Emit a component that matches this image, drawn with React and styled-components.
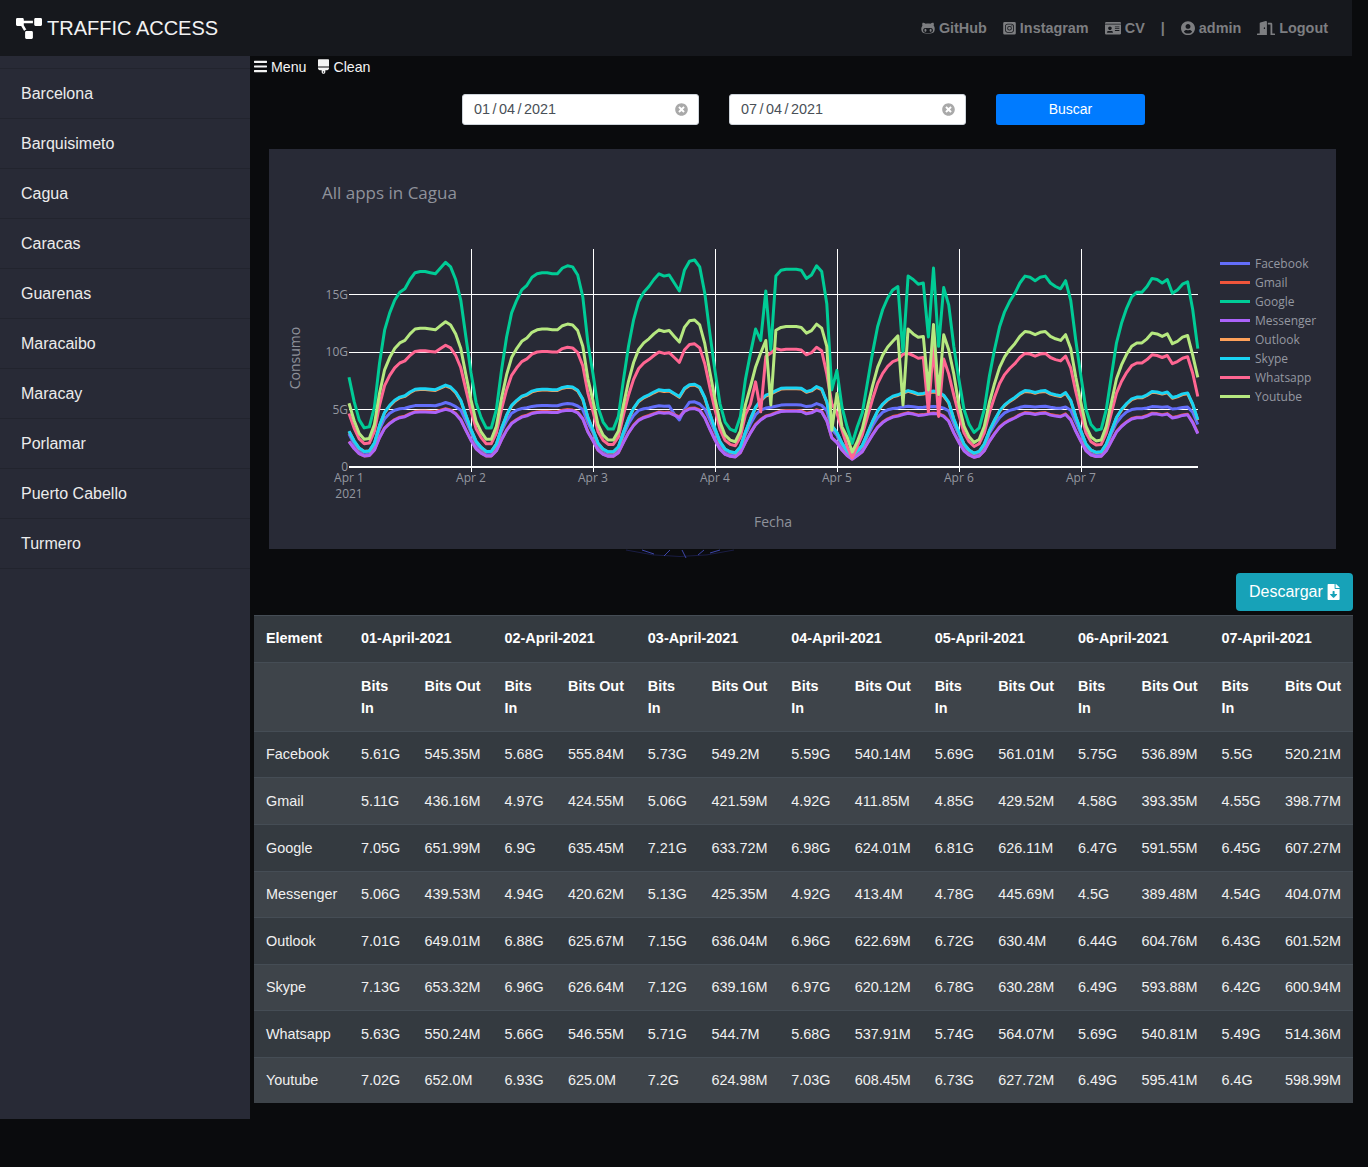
import styled, { createGlobalStyle } from "styled-components";
import {
  FaBars,
  FaBrush,
  FaDoorOpen,
  FaFileDownload,
  FaGithubAlt,
  FaIdCard,
  FaInstagramSquare,
  FaProjectDiagram,
  FaTimesCircle,
  FaUserCircle,
} from "react-icons/fa";

const CITIES = [
  "Barcelona",
  "Barquisimeto",
  "Cagua",
  "Caracas",
  "Guarenas",
  "Maracaibo",
  "Maracay",
  "Porlamar",
  "Puerto Cabello",
  "Turmero",
];

const DAYS = ["01", "02", "03", "04", "05", "06", "07"];

const ROWS = [
  ["Facebook", "5.61G", "545.35M", "5.68G", "555.84M", "5.73G", "549.2M", "5.59G", "540.14M", "5.69G", "561.01M", "5.75G", "536.89M", "5.5G", "520.21M"],
  ["Gmail", "5.11G", "436.16M", "4.97G", "424.55M", "5.06G", "421.59M", "4.92G", "411.85M", "4.85G", "429.52M", "4.58G", "393.35M", "4.55G", "398.77M"],
  ["Google", "7.05G", "651.99M", "6.9G", "635.45M", "7.21G", "633.72M", "6.98G", "624.01M", "6.81G", "626.11M", "6.47G", "591.55M", "6.45G", "607.27M"],
  ["Messenger", "5.06G", "439.53M", "4.94G", "420.62M", "5.13G", "425.35M", "4.92G", "413.4M", "4.78G", "445.69M", "4.5G", "389.48M", "4.54G", "404.07M"],
  ["Outlook", "7.01G", "649.01M", "6.88G", "625.67M", "7.15G", "636.04M", "6.96G", "622.69M", "6.72G", "630.4M", "6.44G", "604.76M", "6.43G", "601.52M"],
  ["Skype", "7.13G", "653.32M", "6.96G", "626.64M", "7.12G", "639.16M", "6.97G", "620.12M", "6.78G", "630.28M", "6.49G", "593.88M", "6.42G", "600.94M"],
  ["Whatsapp", "5.63G", "550.24M", "5.66G", "546.55M", "5.71G", "544.7M", "5.68G", "537.91M", "5.74G", "564.07M", "5.69G", "540.81M", "5.49G", "514.36M"],
  ["Youtube", "7.02G", "652.0M", "6.93G", "625.0M", "7.2G", "624.98M", "7.03G", "608.45M", "6.73G", "627.72M", "6.49G", "595.41M", "6.4G", "598.99M"],
];

// hourly traffic shape of one day, in G
const BASE = [
  [7.8, 5.7, 4.1, 3.4, 3.5, 5.2, 9, 11.9, 13.4, 14.5, 15.2, 15.5, 16.3, 16.9, 17, 17, 16.9, 16.8, 17.3, 17.8, 17.4, 16.3, 14.5, 11.3],
  [8.2, 5.6, 4.3, 3.4, 3.4, 5, 8.4, 11.3, 13.4, 14.5, 15.4, 15.8, 16.5, 16.8, 16.9, 16.9, 16.8, 16.8, 17.3, 17.5, 17.4, 16.7, 14.8, 10.8],
  [8.1, 5.2, 3.9, 3.3, 3.3, 4.4, 7.6, 10.5, 12.8, 14.4, 15.2, 15.7, 16.3, 16.8, 16.6, 16.7, 16, 15.3, 17.1, 17.9, 18, 17.4, 15.1, 11.6],
  [8.4, 5.5, 3.9, 3.3, 3.1, 4.4, 7.6, 10.5, 13, 14.5, 15.6, 16, 16.6, 17.1, 17.2, 17.2, 17.2, 17.1, 16.4, 16.7, 17.5, 17, 14.2, 9],
  [7.5, 5.2, 3.5, 2.4, 3.5, 4.7, 7.3, 9.9, 12.2, 13.7, 14.7, 15.4, 15.7, 16.2, 16.6, 16.3, 15.9, 16, 16.3, 16.5, 16.3, 15.6, 14.1, 10.5],
  [7.6, 5, 3.7, 3, 3.4, 5, 7.9, 10.2, 12.2, 13.5, 14.4, 15.1, 16, 16.6, 16.5, 16.2, 16.5, 16.6, 16, 15.7, 15.5, 16.2, 14.5, 11],
  [7.9, 5, 3.7, 3.2, 3.3, 5, 7.9, 10.8, 12.5, 13.8, 14.8, 15.2, 15.2, 15.7, 16.4, 16.3, 16, 16.3, 15.1, 15.4, 15.9, 16.1, 13.7, 10.3],
].flat();

// the outages of 4 and 5 April: [day index, hour, value]
const SPIKES = {
  Google: [[3, 7, 9.9], [3, 8, 12], [3, 9, 11], [3, 10, 15.3], [3, 11, 10.2], [3, 23, 6.7], [4, 0, 8.4], [4, 3, 2.05], [4, 13, 9.9], [4, 18, 11.3], [4, 19, 17.3], [4, 20, 10.5]],
  Youtube: [[3, 7, 7], [3, 8, 8.7], [3, 9, 9.9], [3, 10, 11], [3, 11, 5.4], [3, 12, 11.9], [3, 22, 10.5], [3, 23, 3.2], [4, 0, 6.4], [4, 1, 3.5], [4, 2, 2.6], [4, 3, 1.3], [4, 4, 2.2], [4, 12, 11.4], [4, 13, 5.4], [4, 14, 12], [4, 18, 6.7], [4, 19, 12.4], [4, 20, 6.3], [4, 21, 11.5], [4, 22, 10.2], [4, 23, 8.1], [6, 23, 7.8]],
  Whatsapp: [[3, 7, 5.5], [3, 8, 7.4], [3, 9, 4.8], [3, 10, 9.6], [3, 11, 9.9], [3, 12, 10.3], [3, 22, 8.1], [3, 23, 5.5], [4, 0, 4.7], [4, 1, 3.2], [4, 2, 1.8], [4, 3, 0.8], [4, 4, 1.8], [4, 13, 9.8], [4, 18, 4.8], [4, 19, 10.5], [4, 20, 4.4], [4, 21, 9.4], [4, 22, 8.1]],
  Facebook: [[2, 16, 4.6], [2, 17, 4.1], [2, 18, 5]],
};

const clamp01 = (n) => Math.min(1, Math.max(0, n));

const SERIES = [
  { name: "Facebook", color: "#636efa", level: (v) => 0.315 * v + 0.45 * clamp01((v - 4) / 4) * clamp01((17 - v) / 3) },
  { name: "Gmail", color: "#ef553b", level: (v) => 0.285 * v },
  { name: "Google", color: "#00cc96", level: (v) => v },
  { name: "Messenger", color: "#ab63fa", level: (v) => 0.282 * v },
  { name: "Outlook", color: "#ffa15a", level: (v) => 0.396 * v },
  { name: "Skype", color: "#19d3f3", level: (v) => 0.4 * v },
  { name: "Whatsapp", color: "#ff6692", level: (v) => 0.595 * v },
  { name: "Youtube", color: "#b6e880", level: (v) => 0.71 * v },
];

const PLOT_X = 80;
const PLOT_END = 929;
const PLOT_TOP = 100;
const PLOT_Y = 318;
const DAY_W = 121.98;

const toX = (hour) => PLOT_X + (hour * DAY_W) / 24;
const toY = (g) => PLOT_Y - g * 11.5;
const dayLine = (d) => Math.round(toX(d * 24)) + 0.5;

const seriesPath = ({ name, level }) => {
  const values = BASE.map(level);
  (SPIKES[name] || []).forEach(([day, hour, value]) => {
    values[day * 24 + hour] = value;
  });
  return values.map((v, i) => `${i ? "L" : "M"}${toX(i).toFixed(1)} ${toY(v).toFixed(1)}`).join("");
};

const Chart = () => {
  return (
    <ChartSvg width="1067" height="400" viewBox="0 0 1067 400">
      <ChartTitle x="53" y="50">All apps in Cagua</ChartTitle>

      {[1, 2, 3, 4, 5, 6].map((d) => (
        <GridLine key={d} x1={dayLine(d)} x2={dayLine(d)} y1={PLOT_TOP} y2={PLOT_Y + 5} />
      ))}
      {[5, 10, 15].map((g) => (
        <GridLine key={g} x1={PLOT_X} x2={PLOT_END} y1={toY(g)} y2={toY(g)} />
      ))}
      <BaseLine x1={PLOT_X} x2={PLOT_END} y1={PLOT_Y} y2={PLOT_Y} />

      {[0, 5, 10, 15].map((g) => (
        <AxisText key={g} x={PLOT_X - 1} y={toY(g) + 4} textAnchor="end">
          {g ? `${g}G` : "0"}
        </AxisText>
      ))}
      {[0, 1, 2, 3, 4, 5, 6].map((d) => (
        <AxisText key={d} x={toX(d * 24)} y="333" textAnchor="middle">
          Apr {d + 1}
        </AxisText>
      ))}
      <AxisText x={PLOT_X} y="349" textAnchor="middle">2021</AxisText>

      <AxisTitle x="504" y="378" textAnchor="middle">Fecha</AxisTitle>
      <AxisTitle transform="translate(31 209) rotate(-90)" textAnchor="middle">Consumo</AxisTitle>

      {SERIES.map((s) => (
        <Trace key={s.name} d={seriesPath(s)} stroke={s.color} />
      ))}

      {SERIES.map((s, i) => (
        <g key={s.name} transform={`translate(951 ${114.5 + i * 19})`}>
          <line x1="0" x2="30" y1="0" y2="0" stroke={s.color} strokeWidth="3" />
          <LegendText x="35" y="4">{s.name}</LegendText>
        </g>
      ))}
    </ChartSvg>
  );
};

const App = () => {
  return (
    <>
      <GlobalStyle />
      <Header>
        <Brand>
          <FaProjectDiagram />
          TRAFFIC ACCESS
        </Brand>
        <HeaderLinks>
          <HeaderLink $icon={14}><FaGithubAlt /> GitHub</HeaderLink>
          <HeaderLink $icon={13}><FaInstagramSquare /> Instagram</HeaderLink>
          <HeaderLink $icon={16.2}><FaIdCard /> CV</HeaderLink>
          <HeaderLink>|</HeaderLink>
          <HeaderLink $icon={14}><FaUserCircle /> admin</HeaderLink>
          <HeaderLink $icon={18}><FaDoorOpen /> Logout</HeaderLink>
        </HeaderLinks>
      </Header>

      <Body>
        <Sidebar>
          {CITIES.map((city) => (
            <SideItem key={city}>{city}</SideItem>
          ))}
        </Sidebar>

        <Main>
          <Tools>
            <Tool $icon={13}><FaBars /> Menu</Tool>
            <Tool $icon={11}><FaBrush /> Clean</Tool>
          </Tools>

          <Filters>
            <DateField>
              01 / 04 / 2021
              <FaTimesCircle />
            </DateField>
            <DateField>
              07 / 04 / 2021
              <FaTimesCircle />
            </DateField>
            <SearchButton>Buscar</SearchButton>
          </Filters>

          <ChartCard>
            <Chart />
          </ChartCard>

          <DownloadRow>
            <Globe width="120" height="10" viewBox="0 0 120 10">
              <path d="M6 1Q60 14 114 1" fill="none" stroke="#1a1d44" strokeWidth="1" />
              <path d="M22 1L34 5M50 1L44 7M62 1L66 9M84 1L78 6M100 1L90 4" fill="none" stroke="#3d46a8" strokeWidth="1" />
            </Globe>
            <DownloadButton>
              Descargar <FaFileDownload />
            </DownloadButton>
          </DownloadRow>

          <DataTable>
            <colgroup>
              <col width="95" />
              {DAYS.map((d) => [<col key={`${d}i`} width="63.5" />, <col key={`${d}o`} width="79.83" />])}
            </colgroup>
            <tbody>
              <tr>
                <Head>Element</Head>
                {DAYS.map((d) => (
                  <Head key={d} colSpan={2}>{d}-April-2021</Head>
                ))}
              </tr>
              <tr>
                <SubHead />
                {DAYS.map((d) => [
                  <SubHead key={`${d}i`}>Bits<br />In</SubHead>,
                  <SubHead key={`${d}o`}>Bits Out</SubHead>,
                ])}
              </tr>
              {ROWS.map((row) => (
                <tr key={row[0]}>
                  {row.map((cell, i) => (
                    <Cell key={i}>{cell}</Cell>
                  ))}
                </tr>
              ))}
            </tbody>
          </DataTable>
        </Main>
      </Body>
    </>
  );
};

export default App;

const GlobalStyle = createGlobalStyle`
  body {
    margin: 0;
    min-height: 1167px;
    background: #0a0b0d;
    font-family: "Liberation Sans", Arial, sans-serif;
    color: #fff;
  }
`;

const Header = styled.header`
  display: flex;
  justify-content: space-between;
  align-items: center;
  width: 1352px;
  height: 56px;
  padding: 0 24px 0 16px;
  box-sizing: border-box;
  background: #16181d;
`;

const Brand = styled.div`
  display: flex;
  align-items: center;
  gap: 5px;
  font-size: 20px;
  color: #f2f2f2;

  svg {
    width: 26px;
    height: 21px;
    color: #fff;
  }
`;

const HeaderLinks = styled.nav`
  display: flex;
  align-items: center;
  gap: 16px;
`;

const HeaderLink = styled.span`
  font-size: 14.4px;
  font-weight: bold;
  color: #7d7e81;

  svg {
    width: ${(props) => props.$icon}px;
    height: 14.4px;
    vertical-align: -2px;
  }
`;

const Body = styled.div`
  display: flex;
  align-items: flex-start;
  gap: 4px;
`;

const Sidebar = styled.aside`
  width: 250px;
  height: 1063px;
  padding-top: 12px;
  box-sizing: border-box;
  background: #282a36;
`;

const SideItem = styled.div`
  display: flex;
  align-items: center;
  height: 50px;
  padding-left: 21px;
  box-sizing: border-box;
  border-top: 1px solid #22242e;
  font-size: 16px;
  color: #ececec;

  &:last-child {
    height: 51px;
    border-bottom: 1px solid #22242e;
  }
`;

const Main = styled.main`
  width: 1099px;
`;

const Tools = styled.div`
  display: flex;
  gap: 12px;
  height: 22px;
  align-items: center;
`;

const Tool = styled.span`
  font-size: 14.2px;
  color: #f4f4f4;

  svg {
    width: ${(props) => props.$icon}px;
    height: 15px;
    vertical-align: -2px;
  }
`;

const Filters = styled.div`
  display: flex;
  justify-content: center;
  gap: 30px;
  margin-top: 16px;
`;

const DateField = styled.div`
  display: flex;
  justify-content: space-between;
  align-items: center;
  width: 237px;
  height: 31px;
  padding: 0 10px 2px 11px;
  box-sizing: border-box;
  border: 1px solid #ced4da;
  border-radius: 3px;
  background: #fff;
  font-size: 14.4px;
  word-spacing: -1.5px;
  color: #495057;

  svg {
    width: 13px;
    height: 13px;
    margin-top: 2px;
    color: #a9a9a9;
  }
`;

const SearchButton = styled.button`
  width: 149px;
  height: 31px;
  padding: 0 0 2px;
  border: none;
  border-radius: 3px;
  background: #007bff;
  color: #fff;
  font-family: inherit;
  font-size: 14px;
`;

const ChartCard = styled.section`
  position: relative;
  z-index: 1;
  width: 1067px;
  height: 400px;
  margin: 24px 0 0 15px;
  background: #282a36;
`;

const ChartSvg = styled.svg`
  display: block;
  font-family: "Open Sans", sans-serif;
`;

const ChartTitle = styled.text`
  font-size: 17px;
  fill: #8f929b;
`;

const AxisText = styled.text`
  font-size: 12px;
  fill: #9598a1;
`;

const AxisTitle = styled.text`
  font-size: 14px;
  fill: #8f929b;
`;

const LegendText = styled.text`
  font-size: 12px;
  fill: #9598a1;
`;

const GridLine = styled.line`
  stroke: #fff;
  stroke-width: 1;
  shape-rendering: crispEdges;
`;

const BaseLine = styled.line`
  stroke: #fff;
  stroke-width: 2;
  shape-rendering: crispEdges;
`;

const Trace = styled.path`
  fill: none;
  stroke-width: 3;
  stroke-linejoin: round;
`;

const DownloadRow = styled.div`
  position: relative;
  display: flex;
  justify-content: flex-end;
  padding-top: 24px;
`;

const Globe = styled.svg`
  position: absolute;
  top: 0;
  left: 366px;
`;

const DownloadButton = styled.button`
  display: flex;
  align-items: center;
  gap: 4px;
  width: 117px;
  height: 38px;
  padding: 0 13px;
  border: none;
  border-radius: 4px;
  background: #17a2b8;
  color: #fff;
  font-family: inherit;
  font-size: 16px;
`;

const DataTable = styled.table`
  width: 1099px;
  margin-top: 4px;
  table-layout: fixed;
  border-collapse: collapse;
  font-size: 14.4px;
  line-height: 21.6px;
  color: #fff;

  tr:nth-child(odd) {
    background: #343a40;
  }

  tr:nth-child(even) {
    background: #3e444a;
  }
`;

const Head = styled.td`
  padding: 12px;
  border-top: 1px solid #454d55;
  font-weight: bold;
  vertical-align: top;
`;

const SubHead = styled(Head)`
  padding: 12.4px 6px 11.8px 12px;
  line-height: 22px;
  white-space: nowrap;
`;

const Cell = styled.td`
  padding: 12.6px 12px 11.4px;
  border-top: 1px solid #454d55;
  vertical-align: top;
  color: #f0f0f0;
  white-space: nowrap;
`;
